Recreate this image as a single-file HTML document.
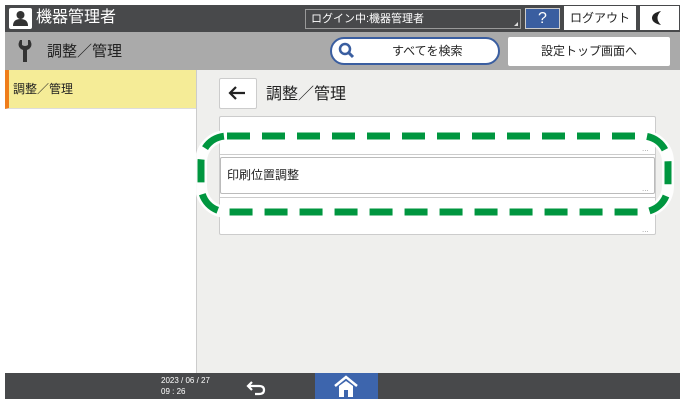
<!DOCTYPE html><html><head><meta charset="utf-8"><style>
*{margin:0;padding:0;box-sizing:border-box}
body{width:683px;height:404px;background:#fff;position:relative;overflow:hidden;font-family:"Liberation Sans","Noto Sans CJK JP",sans-serif;color:#222}
.a{position:absolute}
</style></head><body>
<div class="a" style="left:5px;top:5px;width:675px;height:27px;background:#48494b"></div>
<div class="a" style="left:9px;top:8px;width:23px;height:21px;background:#fff;border-radius:2px"><svg width="23" height="21"><circle cx="11.5" cy="7" r="4" fill="#333"/><path d="M4 18 Q4 11 11.5 11 Q19 11 19 18Z" fill="#333"/></svg></div>
<div class="a" style="left:36px;top:7px;color:#fff;font-size:16px;line-height:22px">機器管理者</div>
<div class="a" style="left:305px;top:9px;width:216px;height:20px;border:1px solid #999;color:#fff;font-size:11px;line-height:18px;padding-left:5px">ログイン中:機器管理者<span style="position:absolute;right:2px;bottom:2px;width:0;height:0;border-left:4px solid transparent;border-bottom:4px solid #ddd"></span></div>
<div class="a" style="left:525px;top:8px;width:35px;height:21px;background:#3a5ea0;border:1px solid #ccc;color:#fff;font-size:16px;text-align:center;line-height:19px">?</div>
<div class="a" style="left:564px;top:6px;width:72px;height:24px;background:#fff;font-size:12px;text-align:center;line-height:24px">ログアウト</div>
<div class="a" style="left:640px;top:6px;width:39px;height:24px;background:#fff"><svg width="39" height="24"><path d="M21 5 Q14 12 21 19 Q12 17 12 12 Q12 7 21 5Z" fill="#222"/></svg></div>
<div class="a" style="left:5px;top:32px;width:675px;height:38px;background:#aaaaaa"></div>
<svg class="a" style="left:16px;top:38px" width="18" height="26"><path d="M4 2 Q0 9 7 12 L7 24 L11 24 L11 12 Q18 9 14 2 L12 2 L12 7 Q9 9 6 7 L6 2Z" fill="#333"/></svg>
<div class="a" style="left:47px;top:42px;font-size:15px;line-height:20px">調整／管理</div>
<div class="a" style="left:330px;top:37px;width:170px;height:28px;background:#fff;border:2px solid #3a5ea0;border-radius:14px;font-size:12px;line-height:24px;padding-left:60px">すべてを検索</div>
<svg class="a" style="left:338px;top:42px" width="18" height="18"><circle cx="7" cy="7" r="5" fill="none" stroke="#3a5ea0" stroke-width="2.5"/><path d="M10 10 L15 15" stroke="#3a5ea0" stroke-width="3"/></svg>
<div class="a" style="left:508px;top:37px;width:162px;height:29px;background:#fff;border-radius:2px;font-size:12px;text-align:center;line-height:29px">設定トップ画面へ</div>
<div class="a" style="left:5px;top:70px;width:192px;height:303px;background:#fff;border-right:1px solid #ccc"></div>
<div class="a" style="left:5px;top:70px;width:191px;height:39px;background:#f5ec97;border-left:4px solid #ef7d1a;border-bottom:1px solid #ddd;font-size:12px;line-height:38px;padding-left:4px">調整／管理</div>
<div class="a" style="left:197px;top:70px;width:483px;height:303px;background:#efefed"></div>
<div class="a" style="left:219px;top:78px;width:38px;height:31px;background:#fff;border:1px solid #ccc;border-radius:2px"><svg width="36" height="29"><path d="M10 14 L25 14 M16 8 L10 14 L16 20" fill="none" stroke="#222" stroke-width="2.2"/></svg></div>
<div class="a" style="left:266px;top:84px;font-size:16px;line-height:22px">調整／管理</div>
<div class="a" style="left:219px;top:116px;width:437px;height:119px;background:#fff;border:1px solid #ccc;border-radius:2px"></div>
<div class="a" style="left:219px;top:154px;width:437px;height:1px;background:#ccc"></div>
<div class="a" style="left:220px;top:157px;width:435px;height:37px;border:1px solid #bbb;border-radius:2px;background:#fff;font-size:12px;line-height:34px;padding-left:6px">印刷位置調整</div>
<div class="a" style="left:219px;top:197px;width:437px;height:1px;background:#ccc"></div>
<div class="a" style="left:642px;top:144px;font-size:8px;color:#999">...</div>
<div class="a" style="left:642px;top:184px;font-size:8px;color:#999">...</div>
<div class="a" style="left:642px;top:225px;font-size:8px;color:#999">...</div>
<svg class="a" style="left:190px;top:125px" width="490" height="98"><rect x="11" y="11" width="467" height="76" rx="26" fill="none" stroke="#fff" stroke-width="12" opacity=".9"/><rect x="11" y="11" width="467" height="76" rx="26" fill="none" stroke="#00963f" stroke-width="7" stroke-dasharray="23,12"/></svg>
<div class="a" style="left:5px;top:373px;width:675px;height:26px;background:#48494b"></div>
<div class="a" style="left:161px;top:375px;color:#fff;font-size:8px;line-height:11px">2023 / 06 / 27<br>09 : 26</div>
<svg class="a" style="left:245px;top:378px" width="24" height="18"><path d="M7 4 L3 8 L7 12 M3 8 L14 8 Q19 8 19 12 Q19 16 14 16 L10 16" fill="none" stroke="#fff" stroke-width="2.2"/></svg>
<div class="a" style="left:315px;top:373px;width:63px;height:26px;background:#3d65ad"></div>
<svg class="a" style="left:333px;top:375px" width="26" height="23"><path d="M2 11 L13 2 L24 11" fill="none" stroke="#fff" stroke-width="2.5"/><path d="M6 11 L13 6 L20 11 L20 22 L6 22Z M11 15 L11 22 L15 22 L15 15Z" fill="#fff" fill-rule="evenodd"/></svg>
</body></html>
